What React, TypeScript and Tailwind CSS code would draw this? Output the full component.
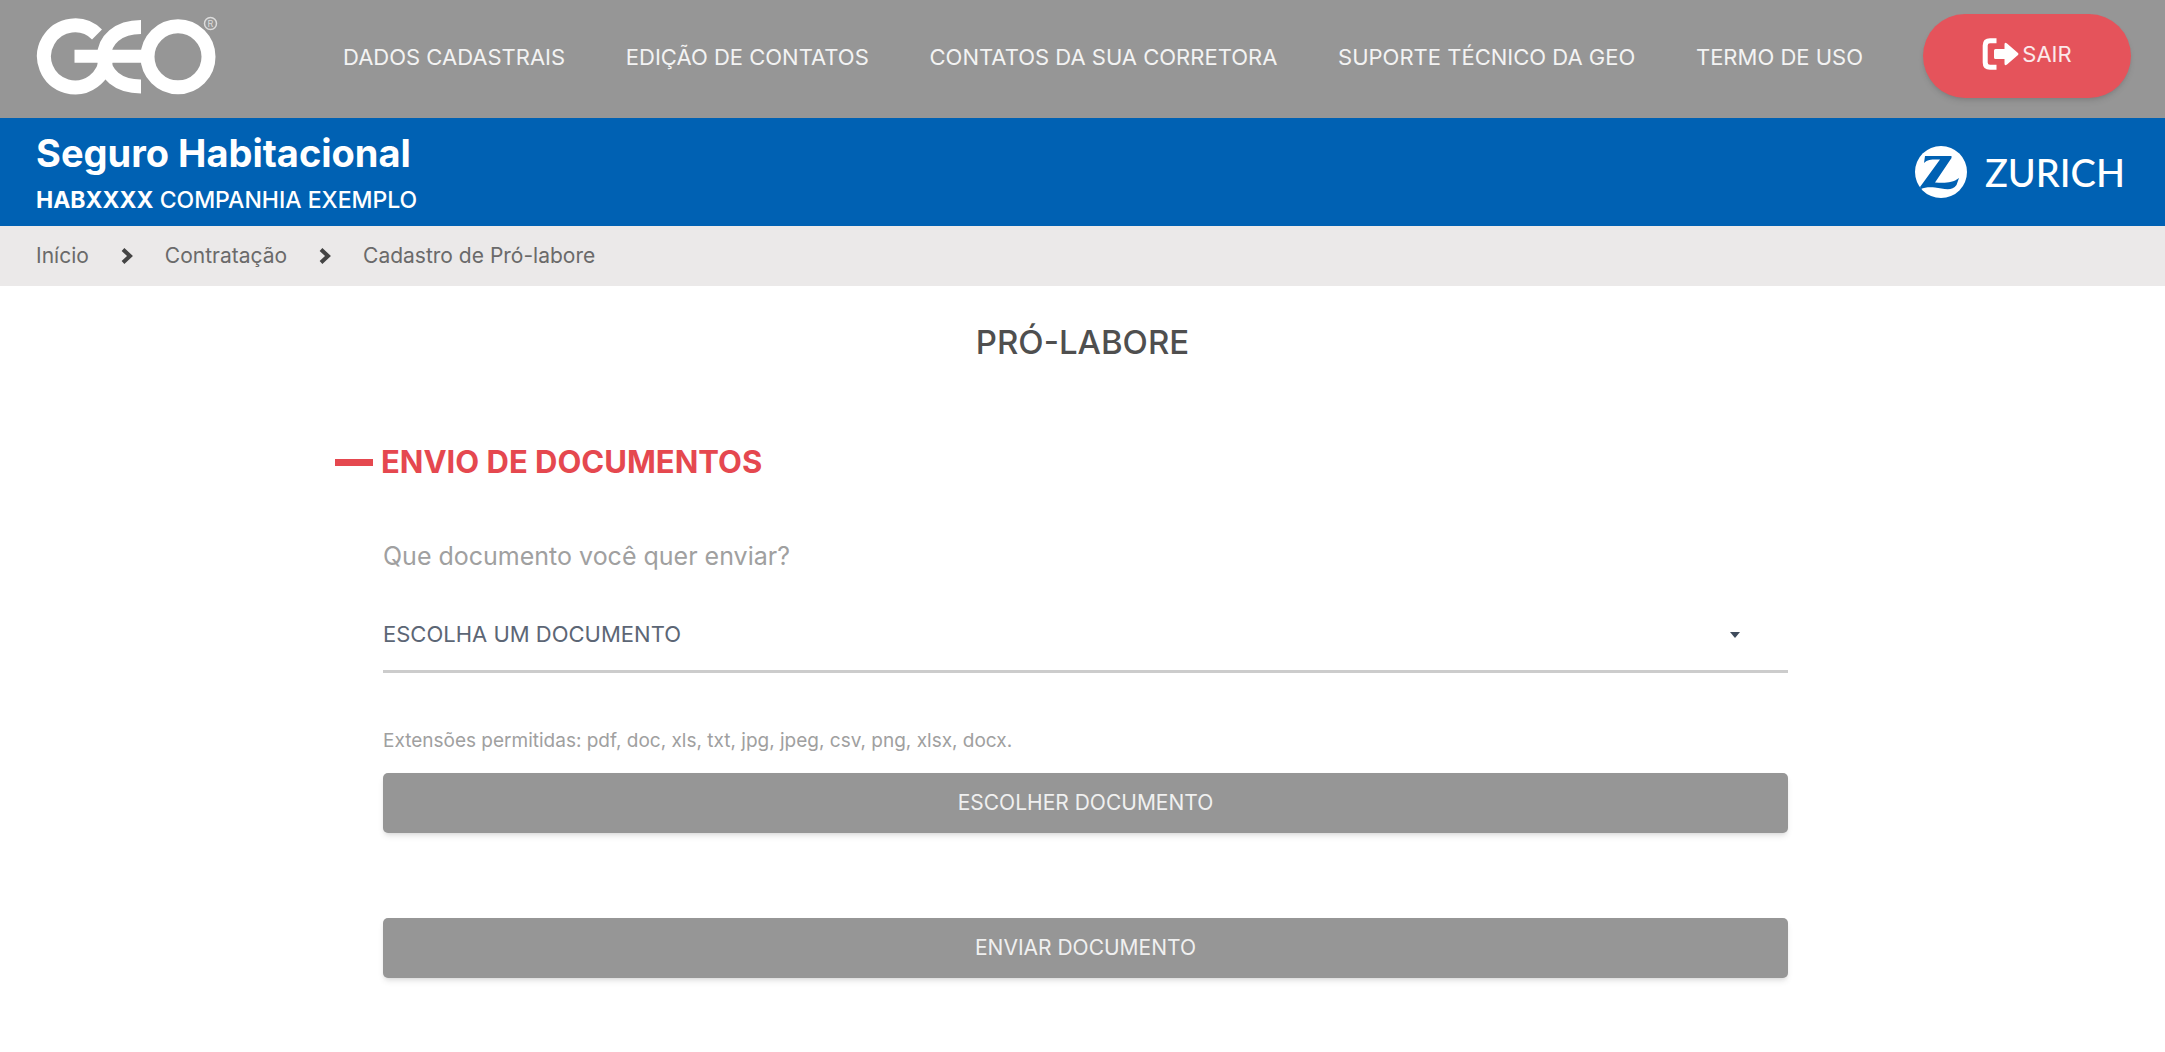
import { useState } from "react"

const menu = [
    "DADOS CADASTRAIS",
    "EDIÇÃO DE CONTATOS",
    "CONTATOS DA SUA CORRETORA",
    "SUPORTE TÉCNICO DA GEO",
    "TERMO DE USO",
]

const GeoLogo = () => (
    <svg className="h-[84px] w-[184px] shrink-0" viewBox="36 14 184 84" fill="none" stroke="#fff" strokeWidth="14" role="img" aria-label="GEO">
        <path d="M97 34.5A31 31 0 1 0 106 57" />
        <path d="M141 27C118 27 104 40 104 57S118 86.500 141 86.500" />
        <path d="M74.500 56.200H146" strokeWidth="13" />
        <circle cx="178" cy="56.800" r="30.500" />
        <circle cx="210.500" cy="23.500" r="6" strokeWidth="1.500" stroke="#dcdcdc" />
        <text x="210.500" y="27" textAnchor="middle" fontSize="9" fill="#dcdcdc" stroke="none">R</text>
    </svg>
)

const ZurichMark = () => (
    <svg className="size-[52px]" viewBox="0 0 52 52" aria-hidden="true">
        <circle cx="26" cy="26" r="26" fill="#fff" />
        <path fill="#0061b3" d="M10 10H36.500V12L20 36.500C29 37 37 37.500 44 32L41.500 39C37 46 28 42.500 20 41.500C14 41 9 41.500 6 43L5 41L25 13.500C18 13.500 13 13 9 17Z" />
    </svg>
)

const ExitIcon = () => (
    <svg className="h-8 w-[38px]" viewBox="0 0 38 32" aria-hidden="true">
        <path d="M14.500 2.700H8Q3.200 2.700 3.200 7.500V24.500Q3.200 29.300 8 29.300H14.500" fill="none" stroke="#fff" strokeWidth="5" strokeLinejoin="round" />
        <path d="M13.500 11H22.500V6.500Q22.500 3.500 25 5.500L36 15Q37 16 36 17L25 26.500Q22.500 28.500 22.500 25.500V21H13.500Q12 21 12 19.500V12.500Q12 11 13.500 11Z" fill="#fff" />
    </svg>
)

const Chevron = () => (
    <svg className="h-4 w-3" viewBox="0 0 12 16" aria-hidden="true">
        <path d="M2 1.500L9 8L2 14.500" fill="none" stroke="#444" strokeWidth="4" />
    </svg>
)

export default function App() {
    const [documento, setDocumento] = useState("")

    return <div className="min-h-screen bg-white font-['Inter',sans-serif]">
        <header className="flex h-[118px] items-center bg-[#969696] pl-9 pr-[34px]">
            <a href="#inicio" className="-mt-1.5"><GeoLogo /></a>
            <nav className="ml-[123px] mr-[60px] flex flex-1 justify-between pb-1 text-[22px] text-[#f3f3f3] whitespace-nowrap">
                {menu.map((item) => (
                    <a key={item} href="#menu">{item}</a>
                ))}
            </nav>
            <button className="mb-1.5 flex h-[84px] w-[208px] items-center justify-center gap-0.5 rounded-full bg-[#e5535b] pb-1 text-[22px] text-[#fbe9ea] shadow-md">
                <ExitIcon />
                SAIR
            </button>
        </header>

        <section className="flex h-[108px] items-center justify-between bg-[#0061b3] pl-9 pr-10 text-white">
            <div className="pt-2">
                <h1 className="text-[38px] leading-[48px] font-bold">Seguro Habitacional</h1>
                <p className="text-[23px] leading-[46px] font-medium"><b>HABXXXX</b> COMPANHIA EXEMPLO</p>
            </div>
            <div className="flex items-center gap-[18px]">
                <ZurichMark />
                <span className="font-['Lato',sans-serif] text-[38px] leading-[40px] font-medium">ZURICH</span>
            </div>
        </section>

        <nav className="flex h-[60px] items-center gap-8 bg-[#ebe9e9] pl-9 text-[21px] text-[#6a6a6a]">
            <a href="#inicio">Início</a>
            <Chevron />
            <a href="#contratacao">Contratação</a>
            <Chevron />
            <span>Cadastro de Pró-labore</span>
        </nav>

        <h2 className="mt-8 text-center text-[33px] leading-[48px] font-medium text-[#4f4f4f]">PRÓ-LABORE</h2>

        <main className="mt-[72px] pr-[377px] pl-[383px]">
            <h3 className="-ml-12 flex items-center gap-2 text-[31px] leading-[48px] font-bold text-[#e5484f]">
                <span className="h-[7px] w-[38px] bg-[#e5484f]" />
                ENVIO DE DOCUMENTOS
            </h3>
            <label htmlFor="documento" className="mt-[46px] block text-[25px] leading-[48px] text-[#a0a0a0]">Que documento você quer enviar?</label>
            <div className="relative mt-[18px] border-b-3 border-[#cccccc]">
                <select
                    id="documento"
                    value={documento}
                    onChange={(e) => setDocumento(e.target.value)}
                    className="block h-[72px] w-full appearance-none bg-transparent text-[22px] text-[#5c6675]"
                >
                    <option value="">ESCOLHA UM DOCUMENTO</option>
                </select>
                <svg className="pointer-events-none absolute top-[34px] right-12 h-1.5 w-2.5" viewBox="0 0 10 6" aria-hidden="true">
                    <path d="M0 0h10L5 6z" fill="#3f4b5c" />
                </svg>
            </div>
            <p className="mt-[52px] text-[19px] leading-[32px] text-[#a0a0a0]">Extensões permitidas: pdf, doc, xls, txt, jpg, jpeg, csv, png, xlsx, docx.</p>
            <button className="mt-4 h-[60px] w-full rounded-[5px] bg-[#969696] text-[21px] text-[#f0f0f0] shadow-md">ESCOLHER DOCUMENTO</button>
            <button className="mt-[85px] h-[60px] w-full rounded-[5px] bg-[#969696] text-[21px] text-[#f0f0f0] shadow-md">ENVIAR DOCUMENTO</button>
        </main>
    </div>
}
